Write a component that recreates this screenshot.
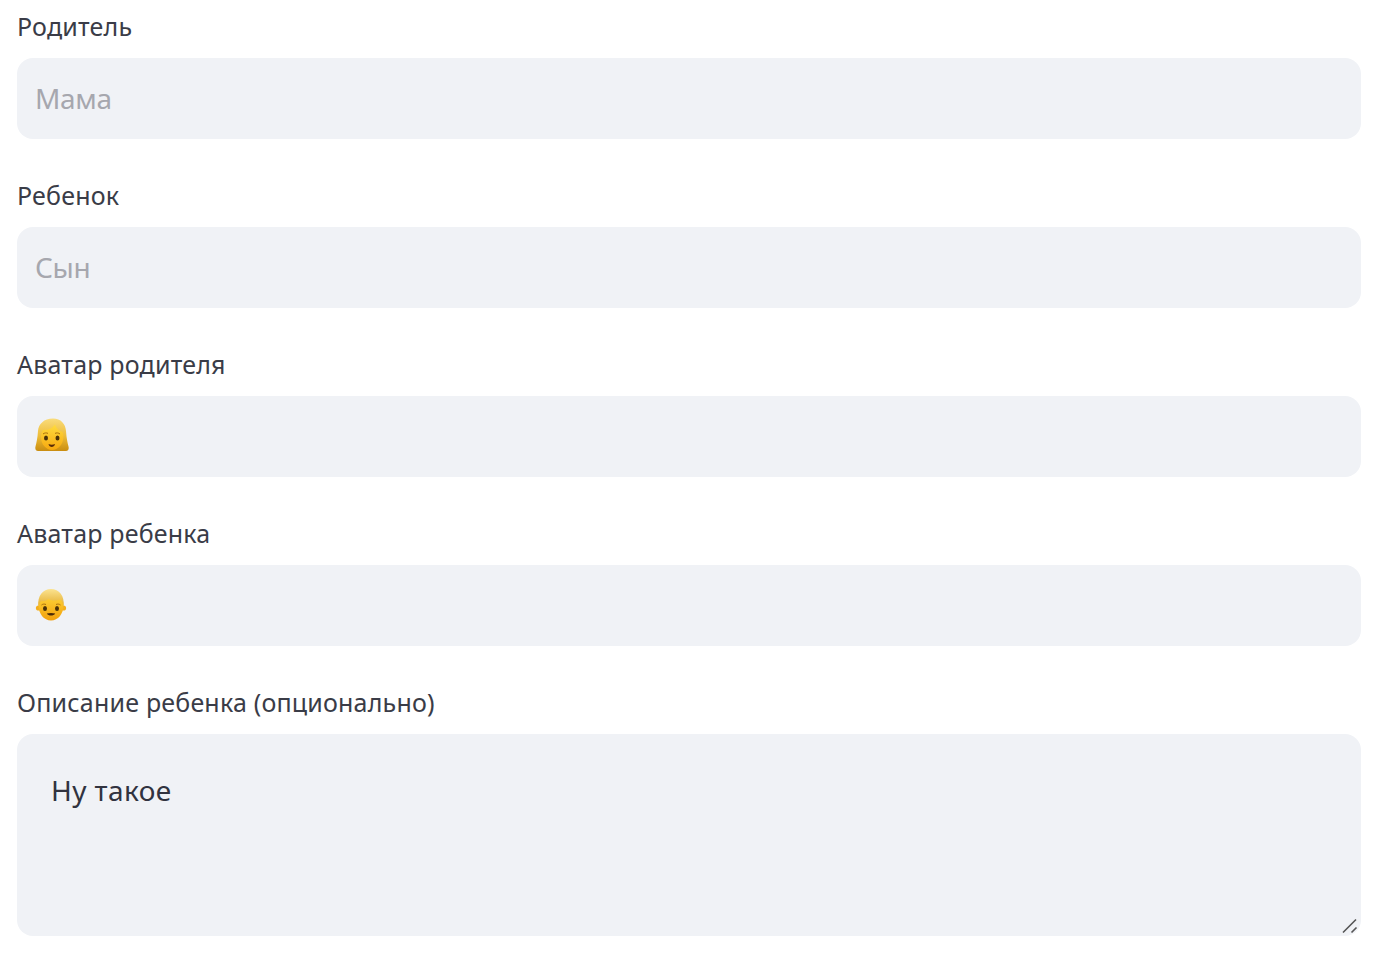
<div class="form">
  <div class="row">
    <div class="lbl">Родитель</div>
    <input class="field" placeholder="Мама" readonly />
  </div>
  <div class="row">
    <div class="lbl">Ребенок</div>
    <input class="field" placeholder="Сын" readonly />
  </div>
  <div class="row">
    <div class="lbl">Аватар родителя</div>
    <div class="field emoji">
      <svg width="34" height="36" viewBox="0 0 34 36" aria-label="👩">
        <defs>
          <linearGradient id="hair" x1="0" y1="0" x2="0" y2="1"><stop offset="0" stop-color="#f9dc7c"/><stop offset="0.55" stop-color="#edbb36"/><stop offset="1" stop-color="#c98d10"/></linearGradient>
          <linearGradient id="face" x1="0" y1="0" x2="0" y2="1"><stop offset="0" stop-color="#ffdc3e"/><stop offset="1" stop-color="#f6a80f"/></linearGradient>
        </defs>
        <path d="M18 .5C9 .5 3.500 6 3 13 2.500 20 1.500 25 .5 28.500-.2 31.500 1 33 3 33h28c2 0 3.200-1.500 2.500-4.500C32.500 25 31.500 20 31 13 30.500 6 26 .5 18 .5z" fill="url(#hair)"/>
        <path d="M6 19c0-3 .6-5 2-7 4.500.5 9-1 12-5.500 1 3.500 4 6.500 7.500 7.500.6 1.400.8 3.200.8 5 0 7.500-5.300 13-11.200 13S6 26.500 6 19z" fill="url(#face)"/>
        <path d="M8 16c1.500-1.200 3.500-1.400 5-.6M20 15.400c1.500-.8 3.500-.6 5 .6" stroke="#a8700c" stroke-width="1" fill="none"/>
        <ellipse cx="11" cy="20" rx="2" ry="2.600" fill="#4a3208"/>
        <ellipse cx="22.500" cy="20" rx="2" ry="2.600" fill="#4a3208"/>
        <path d="M13.500 26c2.200.9 4.300.9 6.500 0-.5 2.300-1.900 3-3.250 3s-2.750-.7-3.250-3z" fill="#5a2c08"/>
      </svg>
    </div>
  </div>
  <div class="row">
    <div class="lbl">Аватар ребенка</div>
    <div class="field emoji">
      <svg width="34" height="34" viewBox="0 0 34 34" aria-label="👦">
        <defs>
          <linearGradient id="hair2" x1="0" y1="0" x2="0" y2="1"><stop offset="0" stop-color="#fbe390"/><stop offset="1" stop-color="#e3ac2c"/></linearGradient>
          <linearGradient id="face2" x1="0" y1="0" x2="0" y2="1"><stop offset="0" stop-color="#ffd93c"/><stop offset="1" stop-color="#f2a00c"/></linearGradient>
        </defs>
        <circle cx="3.500" cy="20" r="2.600" fill="#f4ae1c"/>
        <circle cx="28.500" cy="20" r="2.600" fill="#f4ae1c"/>
        <path d="M3.500 17C3.500 26 9 32.500 16 32.500S28.500 26 28.500 17 23 5 16 5 3.500 8 3.500 17z" fill="url(#face2)"/>
        <path d="M3.500 18.500C2 8 8 1 16 1s14 7 12.500 17.500c-.6-3.500-1.700-5.500-3.200-7-3.500 1.500-8.300 1.500-11.800-.5-2 2-5 2.600-7.500 2.200-1.300 1.300-2 3-2.500 5.300z" fill="url(#hair2)"/>
        <path d="M6.500 17c1.300-1 3-1.200 4.500-.5M21 16.500c1.500-.7 3.200-.5 4.500.5" stroke="#a8700c" stroke-width="1" fill="none"/>
        <ellipse cx="10" cy="20.500" rx="2" ry="2.500" fill="#4a3208"/>
        <ellipse cx="22" cy="20.500" rx="2" ry="2.500" fill="#4a3208"/>
        <path d="M11.800 25.500c2.800-.8 5.600-.8 8.400 0-.8 1.500-2.500 2.100-4.200 2.100s-3.400-.6-4.200-2.100z" fill="#4a2a08"/>
      </svg>
    </div>
  </div>
  <div class="row">
    <div class="lbl">Описание ребенка (опционально)</div>
    <div class="areawrap">
      <textarea class="field area" readonly>Ну такое</textarea>
      <svg class="grip" width="16" height="16" viewBox="0 0 16 16">
        <path d="M1 14.500 14 1.500M9.500 14.500l5-5" stroke="#555" stroke-width="1.600" fill="none"/>
      </svg>
    </div>
  </div>
</div>

<style>
  :global(body) {
    margin: 0;
    background: #fff;
  }
  .form {
    padding: 0 19px 0 17px;
    font-family: "Noto Sans", sans-serif;
    color: #31333f;
  }
  .row {
    margin-bottom: 30px;
  }
  .lbl {
    height: 54px;
    line-height: 52px;
    margin-bottom: 4px;
    font-size: 25px;
    letter-spacing: 0.2px;
    color: #3a3c47;
  }
  .field {
    display: block;
    box-sizing: border-box;
    width: 100%;
    height: 81px;
    margin: 0;
    padding: 0 18px 1px;
    border: 0;
    border-radius: 16px;
    background: #f0f2f6;
    outline: none;
    font-family: inherit;
    font-size: 28px;
    letter-spacing: -0.3px;
    color: #31333f;
  }
  .field::placeholder {
    color: #a6a7ae;
    opacity: 1;
  }
  .emoji {
    display: flex;
    align-items: center;
  }
  .areawrap {
    position: relative;
  }
  .area {
    height: 202px;
    padding: 37px 34px;
    line-height: 38px;
    letter-spacing: 0.4px;
    resize: none;
    overflow: hidden;
  }
  .grip {
    position: absolute;
    right: 3px;
    bottom: 2px;
  }
</style>
